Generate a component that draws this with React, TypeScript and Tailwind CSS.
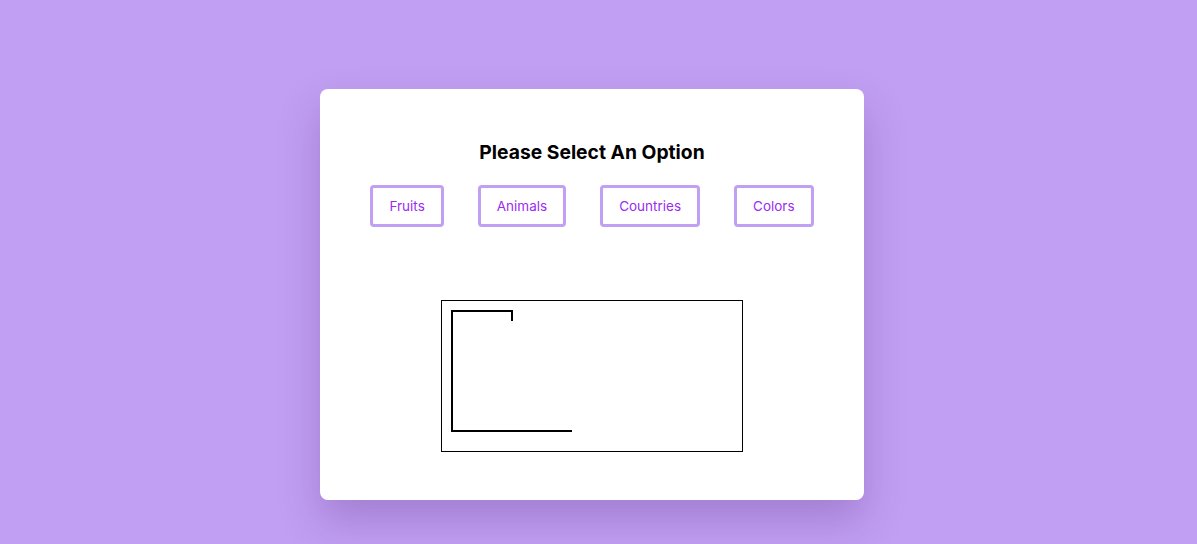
import React from 'react';

const options = ['Fruits', 'Animals', 'Countries', 'Colors'];

const Gallows: React.FC = () => (
  <div className="border border-black w-[302px] h-[152px]">
    <svg width="300" height="150" viewBox="0 0 300 150">
      <g stroke="#000" strokeWidth="2" fill="none" strokeLinecap="square">
        <path d="M10 130 V10 H70 V19" />
        <path d="M10 130 H129" />
      </g>
    </svg>
  </div>
);

export default function App() {
  return (
    <div
      className="w-full h-[544px] bg-[#c19ff2] flex justify-center pt-[89px] pr-[13px]"
      style={{ fontFamily: '"Inter", "Liberation Sans", sans-serif' }}
    >
      <div className="w-[544px] h-[411px] bg-white rounded-lg shadow-[0_20px_40px_rgba(70,30,110,0.25)] flex flex-col items-center pt-[51px]">
        <h1 className="text-[19.3px] font-bold text-black leading-6">Please Select An Option</h1>
        <div className="flex gap-[34px] mt-[21px]">
          {options.map((o) => (
            <button
              key={o}
              className="h-[42px] px-[16px] border-[3px] border-[#c19ff2] rounded-[4px] text-[13.5px] text-[#9a2cf0] bg-white"
            >
              {o}
            </button>
          ))}
        </div>
        <div className="mt-[73px]">
          <Gallows />
        </div>
      </div>
    </div>
  );
}
